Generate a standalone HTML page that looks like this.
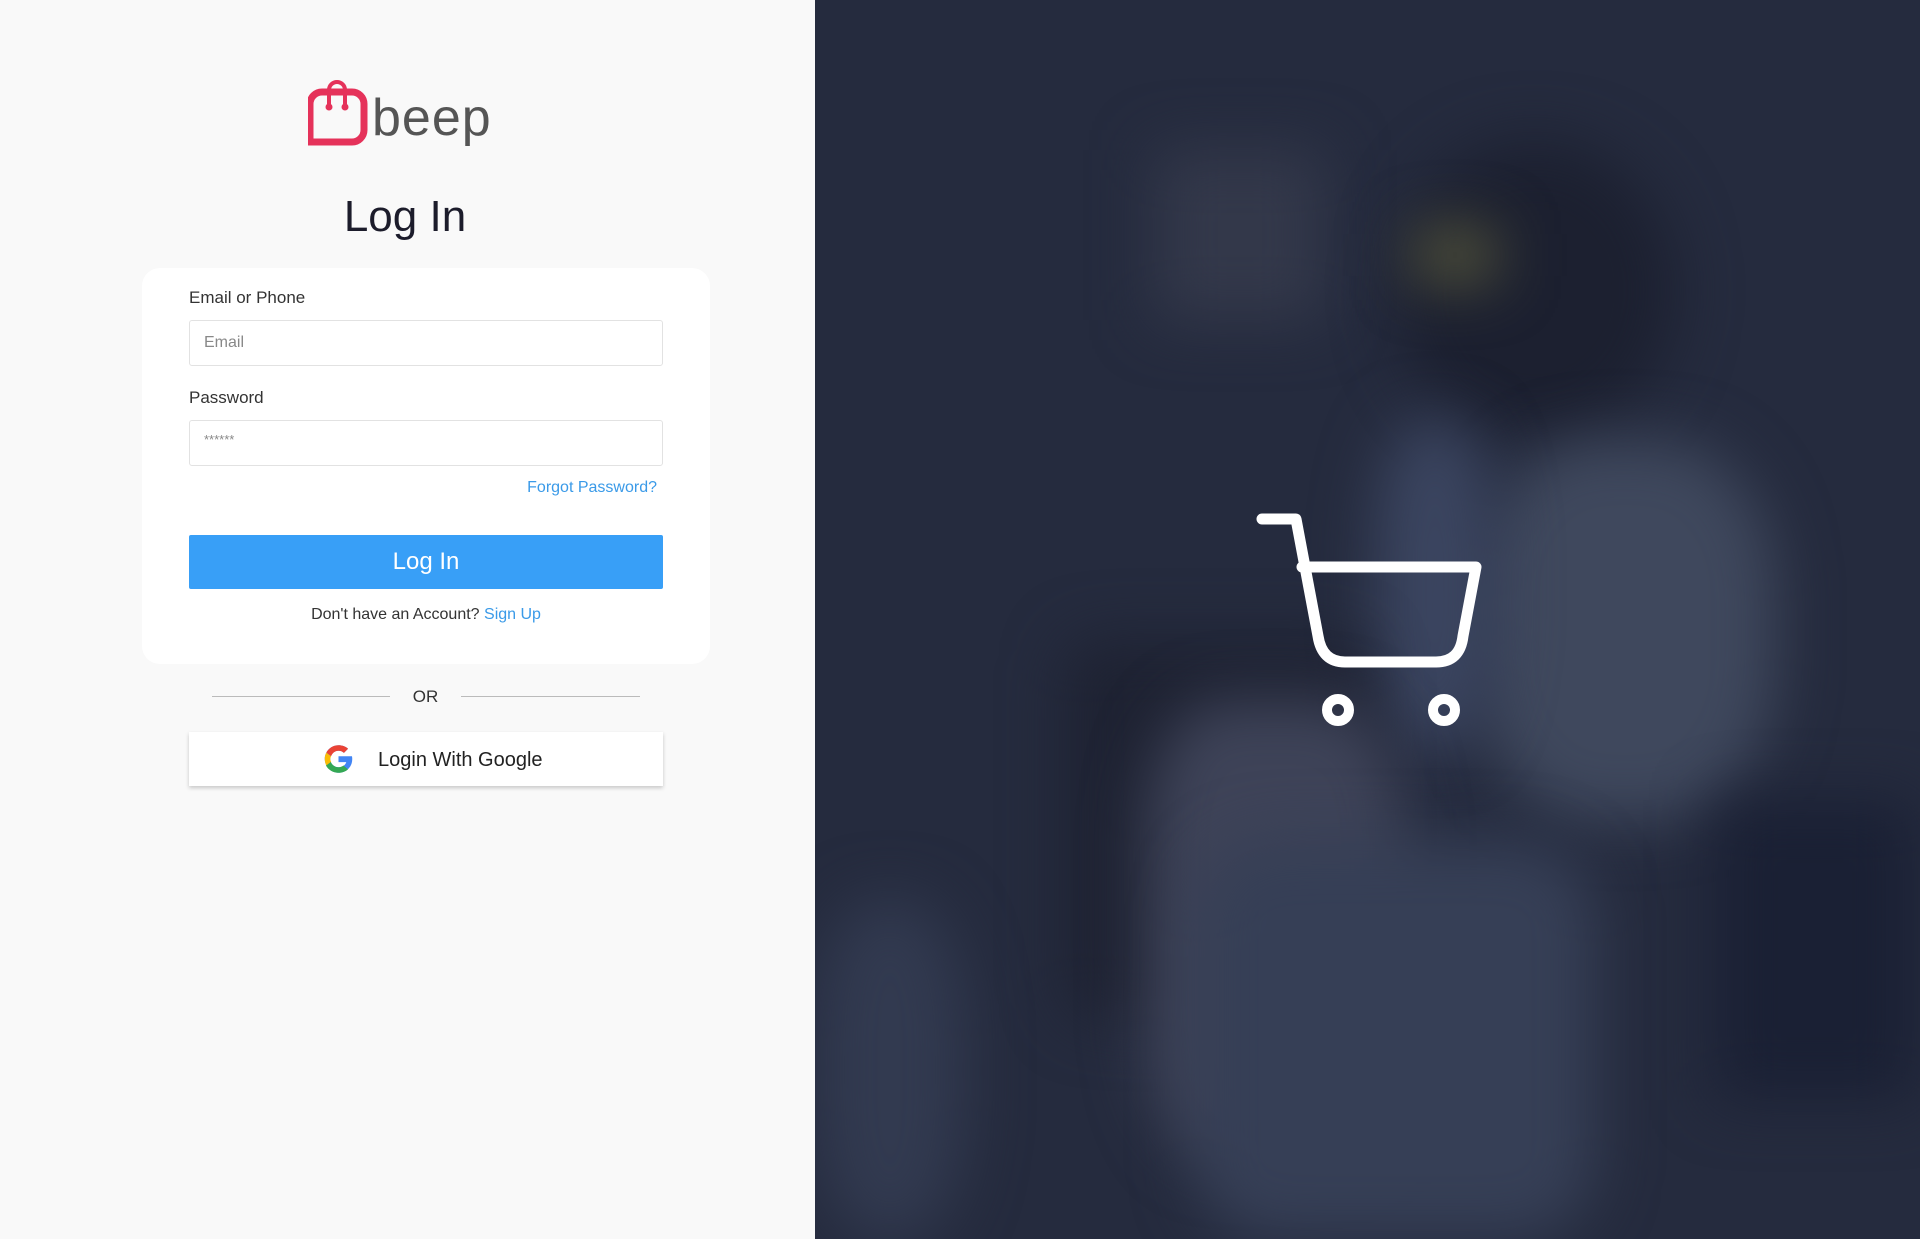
<!DOCTYPE html>
<html><head><meta charset="utf-8"><style>
*{box-sizing:border-box;margin:0;padding:0}
body{width:1920px;height:1239px;overflow:hidden;font-family:"Liberation Sans",sans-serif;background:#f9f9f9;position:relative}
.left{position:absolute;left:0;top:0;width:815px;height:1239px;background:#f9f9f9}
.right{position:absolute;left:815px;top:0;width:1105px;height:1239px;background:#252b3e;overflow:hidden}
.b{position:absolute;filter:blur(30px)}
.card{position:absolute;left:142px;top:268px;width:568px;height:396px;background:#fff;border-radius:18px}
.lbl{position:absolute;left:189px;font-size:17px;color:#333}
.inp{position:absolute;left:189px;width:474px;height:46px;border:1px solid #e2e2e2;border-radius:3px;background:#fff;font-size:16px;color:#888;padding:0 14px;line-height:44px}
.btn{position:absolute;left:189px;top:535px;width:474px;height:54px;background:#389ff7;color:#fff;font-size:24px;text-align:center;line-height:54px;border-radius:2px}
</style></head><body>
<div class="left">
<svg style="position:absolute;left:308px;top:74px" width="186" height="76" viewBox="0 0 186 76">
<path d="M14 18 H44 A12 12 0 0 1 56 30 V56 A12 12 0 0 1 44 68 H2 V30 A12 12 0 0 1 14 18Z" fill="none" stroke="#e5325a" stroke-width="7"/>
<path d="M21 31 V16 A8 8 0 0 1 37 16 V31" fill="none" stroke="#e5325a" stroke-width="4"/>
<circle cx="21" cy="33" r="3.5" fill="#e5325a"/><circle cx="37" cy="33" r="3.5" fill="#e5325a"/>
<text x="64" y="61" font-family="Liberation Sans,sans-serif" font-size="52" fill="#555" letter-spacing="1">beep</text>
</svg>
<div style="position:absolute;left:0;width:810px;top:192px;text-align:center;font-size:44px;color:#1c1c2b">Log In</div>
<div class="card"></div>
<div class="lbl" style="top:288px">Email or Phone</div>
<div class="inp" style="top:320px">Email</div>
<div class="lbl" style="top:388px">Password</div>
<div class="inp" style="top:420px;font-size:13px;line-height:38px">******</div>
<div style="position:absolute;right:158px;top:479px;font-size:16px;color:#3a9ae8">Forgot Password?</div>
<div class="btn">Log In</div>
<div style="position:absolute;left:189px;width:474px;top:606px;text-align:center;font-size:16px;color:#333">Don't have an Account? <span style="color:#3a9ae8">Sign Up</span></div>
<div style="position:absolute;left:212px;top:696px;width:178px;height:1px;background:#bbb"></div>
<div style="position:absolute;left:461px;top:696px;width:179px;height:1px;background:#bbb"></div>
<div style="position:absolute;left:390px;width:71px;top:687px;text-align:center;font-size:17px;color:#333">OR</div>
<div style="position:absolute;left:189px;top:732px;width:474px;height:54px;background:#fff;box-shadow:0 2px 4px rgba(0,0,0,.2)"></div>
<svg style="position:absolute;left:322px;top:742px" width="33" height="34" viewBox="0 0 48 48">
<path d="M43.6 20H24v8.5h11.3C33.7 33.6 29.3 36 24 36c-6.6 0-12-5.4-12-12s5.4-12 12-12c3 0 5.8 1.1 7.9 3l6-6C34.4 5.8 29.5 4 24 4 13 4 4 13 4 24s9 20 20 20c11 0 20-8 20-20 0-1.3-.1-2.7-.4-4z" fill="#4285f4"/>
<path d="M6.3 14.7l7 5.1C15.1 15.2 19.2 12 24 12c3 0 5.8 1.1 7.9 3l6-6C34.4 5.8 29.5 4 24 4 16.3 4 9.7 8.3 6.3 14.7z" fill="#ea4335"/>
<path d="M24 44c5.4 0 10.2-1.8 13.8-5l-6.6-5.5C29.2 35 26.7 36 24 36c-5.2 0-9.6-3.3-11.3-8l-7 5.4C9.1 39.6 16 44 24 44z" fill="#34a853"/>
<path d="M6.3 14.7C4.8 17.5 4 20.6 4 24s.8 6.5 2.3 9.3l7-5.4C12.5 26.7 12 25.4 12 24s.5-2.7 1.3-3.9z" fill="#fbbc05"/>
</svg>
<div style="position:absolute;left:378px;top:749px;font-size:20px;color:#222">Login With Google</div>
</div>
<div class="right">
<div class="b" style="left:340px;top:150px;width:170px;height:170px;background:#33384a"></div>
<div class="b" style="left:580px;top:140px;width:280px;height:300px;background:#1c2030;border-radius:50%"></div>
<div class="b" style="left:660px;top:440px;width:300px;height:380px;background:#3f485d;border-radius:40%"></div>
<div class="b" style="left:560px;top:420px;width:120px;height:330px;background:#3b4560;border-radius:40%"></div>
<div class="b" style="left:250px;top:640px;width:300px;height:380px;background:#1e2232;border-radius:10%"></div>
<div class="b" style="left:330px;top:700px;width:260px;height:460px;background:#3e4358;border-radius:30%"></div>
<div class="b" style="left:380px;top:840px;width:400px;height:400px;background:#363f56;border-radius:20%"></div>
<div class="b" style="left:0;top:900px;width:150px;height:340px;background:#323a50;border-radius:40%"></div>
<div class="b" style="left:900px;top:800px;width:200px;height:300px;background:#1a2034"></div>
<div class="b" style="left:600px;top:230px;width:80px;height:50px;background:#5a5a3c"></div>
<svg style="position:absolute;left:425px;top:500px" width="250" height="240" viewBox="1240 500 250 240">
<path d="M1262 519 H1296 L1318 636 Q1322 662 1345 662 H1436 Q1460 662 1463 636 L1476 567 H1302" fill="none" stroke="#fff" stroke-width="11" stroke-linecap="round" stroke-linejoin="round"/>
<circle cx="1338" cy="710" r="11" fill="none" stroke="#fff" stroke-width="10"/>
<circle cx="1444" cy="710" r="11" fill="none" stroke="#fff" stroke-width="10"/>
</svg>
</div>
</body></html>
